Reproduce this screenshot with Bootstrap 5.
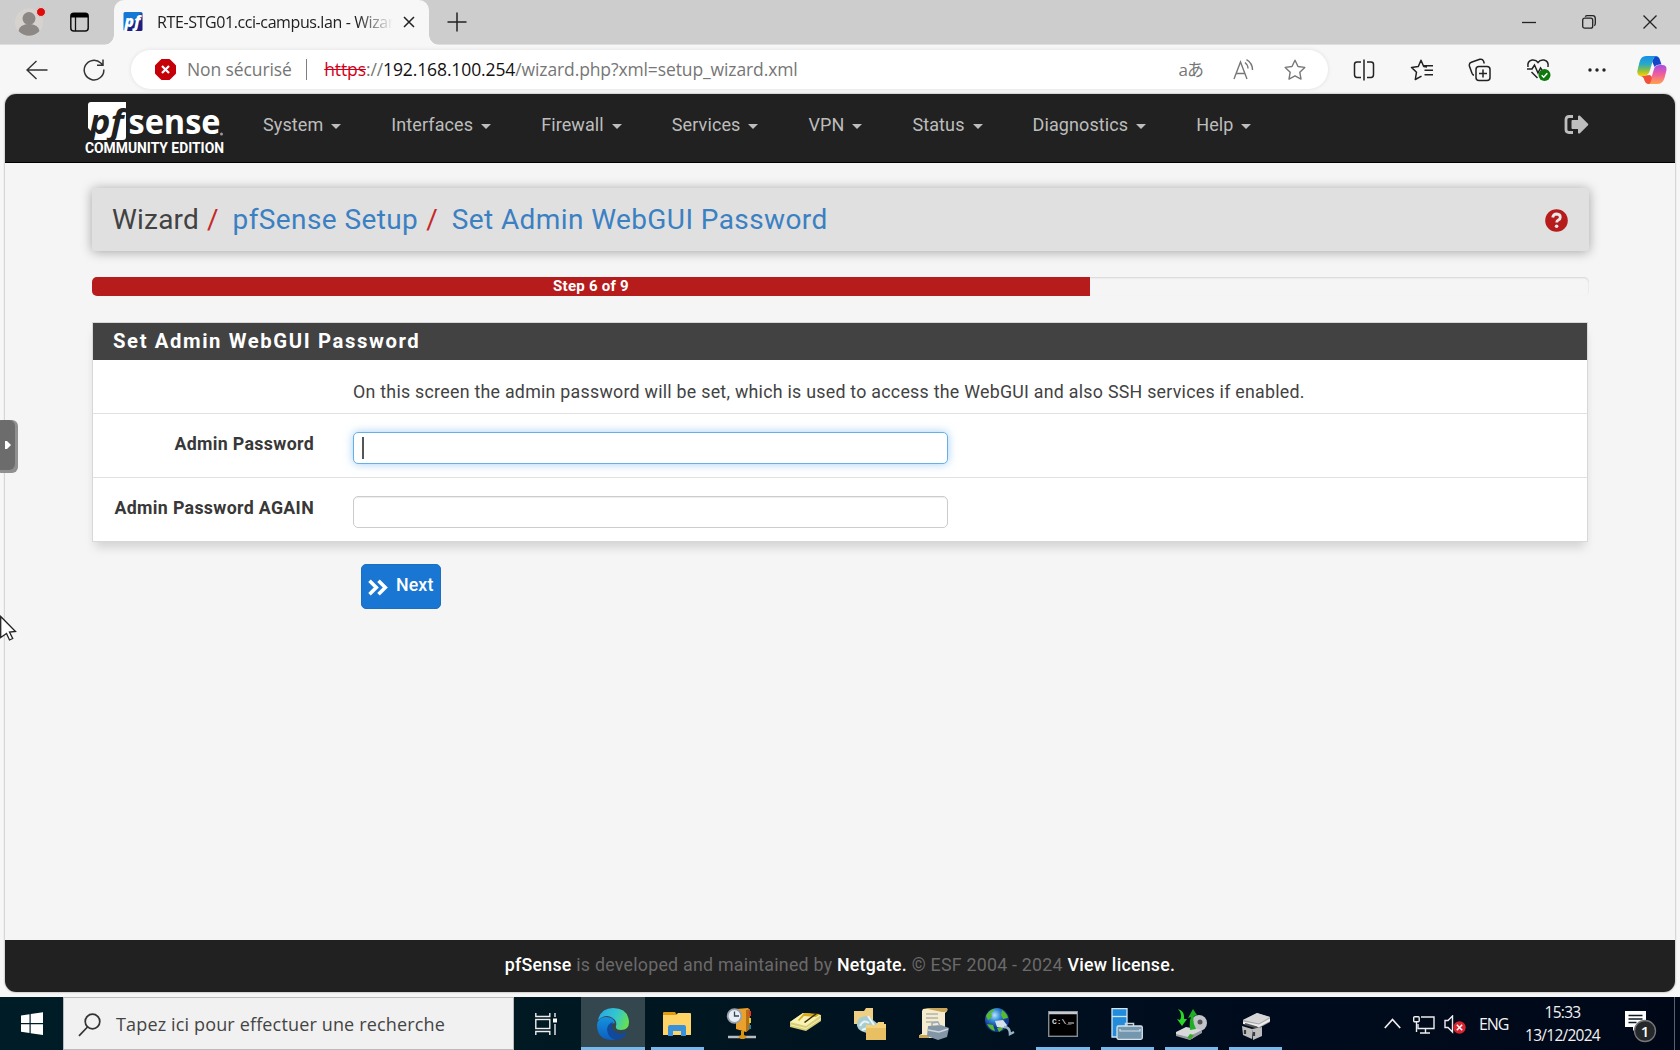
<!DOCTYPE html>
<html lang="fr">
<head>
<meta charset="utf-8">
<title>RTE-STG01.cci-campus.lan - Wizard: pfSense Setup</title>
<link href="https://cdn.jsdelivr.net/npm/bootstrap@5.3.0/dist/css/bootstrap.min.css" rel="stylesheet">
<style>
body{width:1680px;height:1050px;overflow:hidden;background:#f7f7f7;font-family:"Open Sans","Noto Sans CJK JP",sans-serif;color:#212121}
svg{display:block;flex:none}
.tabstrip{height:45px;background:#cdcdcd;border-bottom:1px solid #dedede;padding-left:14px}
.tab{position:relative;width:315px;height:45px;margin-bottom:-1px;background:#f7f7f7;border-radius:10px 10px 0 0;padding:0 0 2px 9px}
.tab:before,.tab:after{content:"";position:absolute;bottom:0;width:10px;height:10px}
.tab:before{left:-10px;background:radial-gradient(circle at 0 0,transparent 9.5px,#f7f7f7 10px)}
.tab:after{right:-10px;background:radial-gradient(circle at 100% 0,transparent 9.5px,#f7f7f7 10px)}
.spaces{margin:0 25px 0 24px}
.tabtitle{width:236px;margin-left:14px;font-size:16px;letter-spacing:-.4px;white-space:nowrap;-webkit-mask-image:linear-gradient(90deg,#000 200px,transparent 236px)}
.tabclose{margin-left:10px}
.newtab{margin-left:18px}
.winbtn{width:60.5px}
.toolbar{height:49px}
.back{margin-left:26px}
.reload{margin-left:35px}
.omni{width:1197px;height:39px;margin-left:25px;border-radius:20px;background:#fff;box-shadow:0 0 4px #0000001a;font-size:17.5px;letter-spacing:-.11px;color:#767676;white-space:nowrap}
.insecure{margin:0 11px 0 24px}
.sep{width:1.5px;height:21px;background:#808080;margin:0 17px 0 14px}
.scheme{color:#d00018;text-decoration:line-through}
.host{color:#111}
.translate{font-size:17px;letter-spacing:-1px;color:#777;margin-right:30px}
.readaloud{margin-right:29px}
.star{margin-right:22px}
.tools{margin-left:7px}
.tool{width:58.2px}
.copilot{margin-left:11px}
.pagewin{width:1670px;height:898px;margin-left:5px;background:#f5f5f5;border-radius:11px;overflow:hidden;font-family:Roboto,sans-serif;font-size:17.8px;box-shadow:0 0 2px #00000080}
.topnav{height:69px;background:#212121;border-bottom:1px solid #000;padding:0 80px}
.brand{margin-top:6px}
.menus{margin:19px 0 0 11px}
.topnav .nav-link{color:#bdbdbd;font-size:18px;line-height:24px;padding:0 25px;letter-spacing:.1px;white-space:nowrap}
.topnav .dropdown-toggle:after{margin-left:8px;border-top:5px solid;border-left:5px solid transparent;border-right:5px solid transparent;vertical-align:2px}
.logout{margin:21px 6px 0 0}
.crumbs{height:63px;margin-top:25px;background:#e0e0e0;border-radius:3px;box-shadow:0 1px 12px #00000055;padding:1px 21px 0 20px;font-size:28px;color:#424242}
.crumbs span:first-child{letter-spacing:.2px}
.crumbs a{color:#3b80c3;text-decoration:none;margin-left:14px;letter-spacing:.4px}
.slash{color:#c62828;margin-left:8px}
.main{width:1497px;margin-left:87px}
.steps{height:19px;margin-top:26px;border-radius:5px;background:#f5f5f5;box-shadow:inset 0 1px 2px #00000022}
.steps .progress-bar{background:#b71c1c;font-size:15px;font-weight:700;line-height:19px;letter-spacing:.25px}
.wizpanel{margin:26px 1px 0 0;background:#fff;border:1px solid #d8d8d8;box-shadow:0 8px 10px -3px #00000026}
.wizhead{height:37px;background:#424242;color:#fff;font-weight:700;font-size:20.3px;letter-spacing:1.6px;padding-left:20px;line-height:36px}
.wizrow{height:64px;border-top:1.5px solid #e2e2e2;padding-top:4px}
.wizrow.intro{height:53px;border-top:0;padding:12px 0 0 260px;letter-spacing:.265px;color:#424242;white-space:nowrap}
.wizlabel{width:221px;font-weight:700;letter-spacing:.32px;color:#383838;margin-bottom:6px;white-space:nowrap}
.wizrow .form-control{width:595px;height:32px;margin-left:39px;border-radius:5px;border:1.5px solid #ccc;box-shadow:inset 0 1px 1px #00000013;padding:4px 8px;background:#fff;font-size:18px}
.wizrow .form-control.active{border-color:#66afe9;box-shadow:0 0 10px #66afe999}
.caret{width:1.5px;height:22px;background:#555}
.nextbtn{width:80px;height:45px;margin:22px 0 0 269px;background:#1976d2;border:1px solid #1b6ec2;border-radius:5px;color:#fff;font-size:17.8px;font-weight:500;padding:0 0 2px 6px;gap:8px;letter-spacing:.1px}
.nextbtn:hover{background:#1976d2;color:#fff}
.nextbtn svg{margin-top:3px}
.foot{height:52px;margin-top:auto;background:#212121;color:#6a6a6a;letter-spacing:.245px;padding-bottom:1px}
.foot b{color:#fff;font-weight:500}
.taskbar{height:53px;margin-top:5px;background:linear-gradient(90deg,#001c26,#001821 35%,#000d1f 70%,#000818);color:#f2f2f2}
.startbtn{width:63px}
.searchbox{width:451px;background:#f1f1f1;border:1.5px solid #bbb;color:#444;font-size:18px;letter-spacing:.15px;white-space:nowrap;padding:2px 0 0 14px;gap:15px}
.taskview{width:67px;padding-left:21px}
.task{width:64.25px;height:53px;position:relative}
.task.running:after{content:"";position:absolute;left:5.5px;right:5.5px;bottom:0;height:3px;background:#76b9ed}
.task.current{background:#34474f}
.task.current:after{left:0;right:0}
.net{margin:2px 0 0 12px}
.vol{margin:3px 0 0 9px}
.lang{font-size:16px;letter-spacing:-1px;margin-left:12px}
.clock{font-size:15.5px;letter-spacing:-.75px;line-height:23px;width:90px;margin-left:9px;text-align:center;white-space:nowrap}
.notif{margin:4px 17px 0 15px}
.clock,.notif{transform:none}
.peek{width:1.5px;height:53px;background:#59616b;margin-right:5px}
.sidehandle{position:absolute;left:-4px;top:420px;width:22px;height:53px;background:#909090;border-radius:6px}
.sidehandle div{width:19px;height:50px;background:#6c6c6c;border-radius:6px;padding-left:4px}
.pointer{position:absolute;left:0;top:614px}
</style>
</head>
<body class="d-flex flex-column">
<div class="tabstrip d-flex align-items-center flex-shrink-0">
  <svg width="32" height="36" viewBox="14 4 32 36"><circle cx="29" cy="22.500" r="14" fill="#d6d3cf"/><circle cx="29" cy="18.500" r="6.500" fill="#8b8886"/><path d="M18.500 31a10.500 7 0 0 1 21 0A14 14 0 0 1 18.500 31z" fill="#8b8886"/><circle cx="41" cy="12" r="4.500" fill="#e00b0b" stroke="#d8d5d2"/></svg>
  <svg class="spaces" width="19" height="20" viewBox="0 0 19 20"><rect x=".8" y="1.300" width="17.400" height="17.600" rx="3" fill="none" stroke="#111" stroke-width="1.500"/><path d="M1 5.500V3.500q0-2.500 2.500-2.500h12q2.500 0 2.500 2.500v2z" fill="#000"/><path d="M5.500 5v14" stroke="#111" stroke-width="1.300"/></svg>
  <div class="tab d-flex align-items-center">
    <svg width="20" height="20" viewBox="0 0 20 20" overflow="visible"><defs><linearGradient id="fv" x1="0" y1="0" x2="1" y2="1"><stop offset=".45" stop-color="#1478d4"/><stop offset=".6" stop-color="#1c1f7e"/></linearGradient></defs><rect x=".5" width="19" height="19" rx="1.500" fill="url(#fv)"/><text x="1.500" y="14.500" font-family="Open Sans,sans-serif" font-size="16" font-weight="800" font-style="italic" fill="#fff" textLength="16" lengthAdjust="spacingAndGlyphs">pf</text></svg>
    <div class="tabtitle">RTE-STG01.cci-campus.lan - Wizar</div>
    <svg class="tabclose" width="12" height="12" viewBox="0 0 12 12"><path d="M1 1l10 10M11 1L1 11" stroke="#222" stroke-width="1.500"/></svg>
  </div>
  <svg class="newtab" width="20" height="20" viewBox="0 0 20 20"><path d="M10 .5v19M.5 10h19" stroke="#222" stroke-width="1.500"/></svg>
  <div class="d-flex ms-auto">
    <div class="winbtn d-flex justify-content-center align-items-center"><svg width="14" height="14"><path d="M0 7.500h14" stroke="#222" stroke-width="1.300"/></svg></div>
    <div class="winbtn d-flex justify-content-center align-items-center"><svg width="14" height="14" viewBox="0 0 14 14" fill="none" stroke="#222" stroke-width="1.300"><rect x=".7" y="3.200" width="10" height="10" rx="2"/><path d="M3.200 1.600Q4 .7 5.200.7h5.300q2.800 0 2.800 2.800v5q0 1.500-1 2.200"/></svg></div>
    <div class="winbtn d-flex justify-content-center align-items-center"><svg width="14" height="14" viewBox="0 0 14 14"><path d="M.5.500l13 13M13.500.500l-13 13" stroke="#222" stroke-width="1.300"/></svg></div>
  </div>
</div>
<div class="toolbar d-flex align-items-center flex-shrink-0">
  <svg class="back" width="22" height="20" viewBox="0 0 22 20" fill="none" stroke="#333" stroke-width="1.400"><path d="M10.500 1L1 10l9.500 9M1 10h20.500"/></svg>
  <svg class="reload" width="23" height="22" viewBox="0 0 23 22" fill="none" stroke="#333" stroke-width="1.500"><path d="M20.800 10.500a9.800 9.800 0 1 1-3-6.500l2 2M20 .5v5.800h-6"/></svg>
  <div class="omni d-flex align-items-center">
    <svg class="insecure" width="21" height="21" viewBox="0 0 21 21"><path d="M6.300.500h8.400l5.800 5.800v8.400l-5.800 5.800H6.300L.5 14.700V6.300z" fill="#c50008" stroke="#c50008" stroke-linejoin="round"/><path d="M7 7l7 7M14 7l-7 7" stroke="#fff" stroke-width="2.200"/></svg>
    <span>Non sécurisé</span>
    <div class="sep"></div>
    <span><span class="scheme">https</span>://<span class="host">192.168.100.254</span>/wizard.php?xml=setup_wizard.xml</span>
    <div class="d-flex align-items-center ms-auto">
      <span class="translate">aあ</span>
      <svg class="readaloud" width="22" height="21" viewBox="0 0 22 21" fill="none" stroke="#777" stroke-width="1.400"><path d="M1 20L7.500 3 14 20M3.200 14.500h8.600M12 3.500q3 2.500 3 6M13.500.7q6 3.500 6 10.300"/></svg>
      <svg class="star" width="22" height="22" viewBox="0 0 22 22" fill="none" stroke="#777" stroke-width="1.400" stroke-linejoin="round"><path d="M11 1.200l3 6.300 6.800.9-5 4.800 1.200 6.900-6-3.300-6 3.300 1.200-6.900-5-4.800 6.800-.9z"/></svg>
    </div>
  </div>
  <div class="tools d-flex align-items-center">
    <div class="tool d-flex justify-content-center"><svg width="22" height="22" viewBox="0 0 22 22" fill="none" stroke="#222" stroke-width="1.500"><path d="M8 3H4Q1.500 3 1.500 5.500v10Q1.500 18.500 4 18.500h4M14 3h4q2.500 0 2.500 2.500v10q0 3-2.500 3h-4M11 .5v21"/></svg></div>
    <div class="tool d-flex justify-content-center"><svg width="24" height="22" viewBox="0 0 24 22" fill="none" stroke="#222" stroke-width="1.500" stroke-linejoin="round"><path d="M17 8l-3.300-.5L11 1.200 8.300 7.500l-6.800.9 5 4.800L5.300 20.500l6.200-3.300M14.500 11.300H23M13.500 6.800H23M14.500 15.800H23"/></svg></div>
    <div class="tool d-flex justify-content-center"><svg width="24" height="24" viewBox="0 0 24 24" fill="none" stroke="#222" stroke-width="1.500"><rect x="8" y="8.500" width="14" height="14" rx="3"/><path d="M15 11.500v8M11 15.500h8M6 17.200q-1.300-.2-2-2L1.400 8Q.8 5.200 3.300 4.300l8.500-3Q14.500.700 15.500 3l.8 2.500"/></svg></div>
    <div class="tool d-flex justify-content-center"><svg width="25" height="24" viewBox="0 0 25 24" fill="none" stroke="#222" stroke-width="1.500"><path d="M2 9Q1 3 6 2q4-.5 6 2.500Q14 1.500 18 2q5 1 4 7M1 11h5l2.500-4 3.500 8 2.500-5 1.500 2M5.500 14l6 6"/><circle cx="18.500" cy="17" r="6" fill="#0e7a0d" stroke="none"/><path d="M15.700 17.200l2 2 3.600-4" stroke="#fff"/></svg></div>
    <div class="tool d-flex justify-content-center"><svg width="20" height="6" viewBox="0 0 20 6" fill="#222"><circle cx="3" cy="3" r="1.700"/><circle cx="10" cy="3" r="1.700"/><circle cx="17" cy="3" r="1.700"/></svg></div>
    <svg class="copilot" width="30" height="28" viewBox="0 0 30 28"><defs><linearGradient id="c1" x1="0" y1="0" x2="0" y2="1"><stop offset="0" stop-color="#1b8ee8"/><stop offset=".4" stop-color="#27a9c9"/><stop offset=".7" stop-color="#86bf45"/><stop offset="1" stop-color="#ffd000"/></linearGradient><linearGradient id="c2" x1="0" y1="0" x2="0" y2="1"><stop offset="0" stop-color="#a94be8"/><stop offset=".5" stop-color="#f0609a"/><stop offset="1" stop-color="#ffa24c"/></linearGradient></defs><path d="M8 28q5 0 6-5l3-10q1-4 6-4h2q5 0 4.500 5l-2 8q-2 6-7 6z" fill="url(#c2)"/><path d="M18 0q4 0 5 4l1.500 4.500Q19 8 17.500 11L15 5z" fill="#1347c8"/><path d="M3 20q3 0 4 3 1 5 5 5 2-1 3-7l-2-2z" fill="#f0503c"/><path d="M21 0q-4 0-5 4l-3 10q-1.500 6-7 6H4Q0 20 .3 15L2.500 6Q4 0 9 0z" fill="url(#c1)"/></svg>
  </div>
</div>
<div class="pagewin d-flex flex-column flex-shrink-0">
  <nav class="topnav d-flex flex-shrink-0">
    <svg class="brand" width="142" height="60" viewBox="85 100 142 60"><path d="M88 105q0-3 3-3h35v35q0 3-3 3H92l-1-9-3-3z" fill="#fff"/><text x="89.500" y="133.500" font-family="Open Sans,sans-serif" font-size="34" font-weight="700" font-style="italic" fill="#212121" textLength="34" lengthAdjust="spacingAndGlyphs">pf</text><text x="128.500" y="133.500" font-family="Open Sans,sans-serif" font-size="34" font-weight="700" fill="#fff" textLength="92" lengthAdjust="spacingAndGlyphs">sense</text><circle cx="221.500" cy="134" r="1.500" fill="#999"/><text x="85" y="152.700" font-family="Roboto,sans-serif" font-size="14" font-weight="700" fill="#fff" textLength="139" lengthAdjust="spacingAndGlyphs">COMMUNITY EDITION</text></svg>
    <ul class="nav flex-nowrap menus">
      <li class="nav-item"><a class="nav-link dropdown-toggle" href="#">System</a></li>
      <li class="nav-item"><a class="nav-link dropdown-toggle" href="#">Interfaces</a></li>
      <li class="nav-item"><a class="nav-link dropdown-toggle" href="#">Firewall</a></li>
      <li class="nav-item"><a class="nav-link dropdown-toggle" href="#">Services</a></li>
      <li class="nav-item"><a class="nav-link dropdown-toggle" href="#">VPN</a></li>
      <li class="nav-item"><a class="nav-link dropdown-toggle" href="#">Status</a></li>
      <li class="nav-item"><a class="nav-link dropdown-toggle" href="#">Diagnostics</a></li>
      <li class="nav-item"><a class="nav-link dropdown-toggle" href="#">Help</a></li>
    </ul>
    <svg class="ms-auto logout" width="25" height="19" viewBox="0 0 25 19"><path d="M9 1.500H5q-3 0-3 3v10q0 3 3 3h4" fill="none" stroke="#bdbdbd" stroke-width="2.800"/><path d="M7.500 6q0-1 1-1H14V1q1-1 2-.3l8 8q.7.800 0 1.600l-8 8q-1 .7-2-.3v-4H8.500q-1 0-1-1z" fill="#bdbdbd"/></svg>
  </nav>
  <main class="main">
    <div class="crumbs d-flex align-items-center">
      <span>Wizard</span><span class="slash">/</span>
      <a href="#">pfSense Setup</a><span class="slash">/</span>
      <a href="#">Set Admin WebGUI Password</a>
      <svg class="ms-auto" width="23" height="23" viewBox="0 0 23 23"><circle cx="11.500" cy="11.500" r="11.300" fill="#b71c1c"/><path d="M7.700 8.500q.5-3.500 4-3.500 3.600.2 3.600 3.200 0 1.700-1.900 2.700-1.700.9-1.700 2.600" fill="none" stroke="#e8e8e8" stroke-width="2.800"/><circle cx="11.600" cy="17.300" r="1.800" fill="#e8e8e8"/></svg>
    </div>
    <div class="progress steps"><div class="progress-bar" style="width:66.667%">Step 6 of 9</div></div>
    <section class="wizpanel">
      <div class="wizhead">Set Admin WebGUI Password</div>
      <div class="wizrow intro d-flex align-items-center">On this screen the admin password will be set, which is used to access the WebGUI and also SSH services if enabled.</div>
      <div class="wizrow d-flex align-items-center"><label class="wizlabel text-end">Admin Password</label><div class="form-control active"><div class="caret"></div></div></div>
      <div class="wizrow d-flex align-items-center"><label class="wizlabel text-end">Admin Password AGAIN</label><div class="form-control"></div></div>
    </section>
    <button class="btn nextbtn d-flex align-items-center"><svg width="20" height="17" viewBox="0 0 20 17" fill="none" stroke="#fff" stroke-width="3.600"><path d="M1.500 1.700L8.300 8.500l-6.800 6.800M10.500 1.700l6.800 6.800-6.800 6.800"/></svg>Next</button>
  </main>
  <footer class="foot d-flex align-items-center justify-content-center"><div><b>pfSense</b> is developed and maintained by <b>Netgate.</b> © ESF 2004 - 2024 <b>View license.</b></div></footer>
</div>
<div class="taskbar d-flex flex-shrink-0">
  <div class="startbtn d-flex justify-content-center align-items-center"><svg width="22" height="23" viewBox="0 0 22 23" fill="#fff"><path d="M0 3.500L8.500 2.200V11H0zM9.700 2L22 .3V11H9.700zM0 12.200h8.500V21L0 19.700zM9.700 12.200H22V23L9.700 21.200z"/></svg></div>
  <div class="searchbox d-flex align-items-center"><svg width="23" height="24" viewBox="0 0 23 24" fill="none" stroke="#333" stroke-width="1.700"><circle cx="14.500" cy="8.500" r="7.300"/><path d="M9.500 14L1 22.800"/></svg>Tapez ici pour effectuer une recherche</div>
  <div class="taskview d-flex align-items-center"><svg width="23" height="22" viewBox="0 0 23 22" fill="none" stroke="#eee" stroke-width="1.400"><path d="M.8 0v3.500h14V0M.8 22v-3.500h14V22M20 0v4M20 11v11"/><rect x=".8" y="6.500" width="14" height="9"/><rect x="18" y="5.500" width="4" height="4" fill="#fff" stroke="none"/></svg></div>
  <div class="task running current d-flex justify-content-center align-items-center"><svg width="32" height="32" viewBox="0 0 32 32"><defs><linearGradient id="e1" x1="0" y1=".3" x2="1" y2=".6"><stop offset="0" stop-color="#28a8e4"/><stop offset=".55" stop-color="#35c6cf"/><stop offset="1" stop-color="#66e14c"/></linearGradient><linearGradient id="e2" x1="0" y1="0" x2="0" y2="1"><stop offset="0" stop-color="#1692dd"/><stop offset="1" stop-color="#0c5fc0"/></linearGradient></defs><path d="M1 12Q4 0 16 0q15 0 16 14 0 8-8 8-6 0-5-4 1-3-1-6Q10 4 1 12z" fill="url(#e1)"/><path d="M0 17Q1 9 9 9q8 0 9 6-5 0-5 6 0 8 9 9-3 2-8 2Q0 31 0 17z" fill="url(#e2)"/><path d="M16 14q-6 2-6 8 1 8 9 10 8-1 11-7-1-1-5 .5-8 1-10-6-.5-3 1-5.500z" fill="#114a9c"/></svg></div>
  <div class="task running d-flex justify-content-center align-items-center"><svg width="30" height="24" viewBox="0 0 30 24"><path d="M1 1q0-1 1-1h11l2 3H1z" fill="#e09b12"/><path d="M1 3h13l2-2h12q1 0 1 1v21H1z" fill="#ffd467"/><path d="M6 24V15q0-2 2-2h14q2 0 2 2v9h-5v-5h-8v5z" fill="#3991dc"/></svg></div>
  <div class="task d-flex justify-content-center align-items-center"><svg width="32" height="32" viewBox="0 0 32 32"><path d="M10 1l12-1 2 2v18l-4 4-10-3z" fill="#e9a02c"/><path d="M20 2l4-1v20l-4 3z" fill="#b66e14"/><path d="M23 3h2v5h-2z" fill="#e33"/><path d="M23 10h2v5h-2z" fill="#dc3"/><path d="M23 17h2v4h-2z" fill="#28a"/><path d="M2 29h28" stroke="#b8bcc0" stroke-width="2.500"/><path d="M15 23h3v4l3 2-3 2h-3l-3-2 3-2z" fill="#d99312"/><circle cx="8.500" cy="8" r="6.800" fill="#e8eef5" stroke="#9aa2ac" stroke-width="1.800"/><path d="M8.500 3.500V8H13" fill="none" stroke="#345" stroke-width="1.300"/></svg></div>
  <div class="task d-flex justify-content-center align-items-center"><svg class="mb-1" width="32" height="22" viewBox="0 0 32 22"><path d="M0 11L13 2l18 2v6L16 20 0 16z" fill="#d9cf7a"/><path d="M0 11L13 2l18 2-15 11z" fill="#f8f3b4"/><path d="M8 9l6-7 16 1-4 3-12-1-5 5z" fill="#d8aa1c"/><path d="M14 11L26 2l1 1-12 9z" fill="#3b2a08"/><path d="M1 14l15 3.500L31 7.500" fill="none" stroke="#f5f0b0"/></svg></div>
  <div class="task d-flex justify-content-center align-items-center"><svg width="32" height="32" viewBox="0 0 32 32"><path d="M0 3h10l2-3h7v16H0z" fill="#efcf83"/><path d="M3 18Q2 8 14 8l10 8-3 9Q5 26 3 18z" fill="#a8cdd1"/><path d="M6 18q3-7 9-3M14 8l6 9M8 22l8-3" stroke="#e8f5f5" stroke-width="2" fill="none"/><path d="M12 17h10l2-3h6v2h2v16H12z" fill="#f4d27b"/><path d="M12 20h20v12H12z" fill="#e9bf63"/></svg></div>
  <div class="task d-flex justify-content-center align-items-center"><svg width="32" height="32" viewBox="0 0 32 32"><path d="M5 1h24q1 2-2 4v22q-1 3-4 3H1q0-4 3-4V3z" fill="#f5ecd0"/><path d="M5 0h24q2 3-2 4H24zM1 27h10v3H1z" fill="#c9a659"/><path d="M8 6h12M8 10h12M8 14h12" stroke="#b3b3a6" stroke-width="1.500"/><path d="M10 18l13-1 8 3-2 9-9 3-11-4z" fill="#8496a6"/><path d="M10 22l11 2 9-3" stroke="#cdd6dd" fill="none" stroke-width="1.500"/><path d="M14 18v-3l6-1 2 4" stroke="#9aabb8" fill="none" stroke-width="1.500"/></svg></div>
  <div class="task d-flex justify-content-center align-items-center"><svg width="32" height="32" viewBox="0 0 32 32"><defs><radialGradient id="gl" cx=".4" cy=".3"><stop offset="0" stop-color="#b5e4ff"/><stop offset=".5" stop-color="#3388d5"/><stop offset="1" stop-color="#123a92"/></radialGradient></defs><circle cx="14" cy="12" r="12" fill="url(#gl)"/><path d="M3 8q4-7 9-7-2 3-4 4l1 4-4 3zM19 2q5 3 6 8l-5 1-2-4zM4 16l6 1 2 6q-5-1-8-7zM14 20l5-1 1 2-4 3z" fill="#57bb2c"/><path d="M12 13l8-1 4 5-2 3-8-1z" fill="#d6e2ea"/><path d="M21 19q6 0 6 7l4-2" fill="none" stroke="#99b4c4" stroke-width="2.500"/></svg></div>
  <div class="task running d-flex justify-content-center align-items-center"><svg width="30" height="26" viewBox="0 0 30 26"><rect x=".7" y=".7" width="28.600" height="24.600" fill="#000" stroke="#858b90" stroke-width="1.400"/><path d="M1 2h28" stroke="#c6cace" stroke-width="2.500"/><text x="4" y="12.500" fill="#ddd" font-family="Liberation Mono,monospace" font-weight="700" font-size="8">C:\_</text><path d="M20 12h6" stroke="#ddd"/></svg></div>
  <div class="task running d-flex justify-content-center align-items-center"><svg width="32" height="32" viewBox="0 0 32 32"><path d="M1 .7h15V29H1z" fill="#238bd9" stroke="#cce7fa" stroke-width="1.300"/><path d="M1 8.500h15" stroke="#cce7fa" stroke-width="1.300"/><path d="M14.500 18v-2.500h8V18" fill="none" stroke="#c8d9e3" stroke-width="1.500"/><rect x="6" y="18" width="25.300" height="13.300" rx="1.500" fill="#7597ae" stroke="#d4e3ec" stroke-width="1.300"/><path d="M9 21v2h20v-2" fill="none" stroke="#d4e3ec" stroke-width="1.200"/></svg></div>
  <div class="task running d-flex justify-content-center align-items-center"><svg width="32" height="32" viewBox="0 0 32 32"><circle cx="24" cy="15" r="8" fill="#c2c4ca"/><circle cx="25" cy="14" r="2.500" fill="#555"/><path d="M1 24l10-5 16 3-9 8q-2 2-5 1L1 27z" fill="#d7d9db"/><path d="M1 26l12 3 14-7v3l-12 7L1 28z" fill="#96999d"/><path d="M15 26l4 1-3 4-4-1z" fill="#38ab27"/><path d="M3 1q7 2 6 10h3l-5 7-5-7 3 1Q8 6 3 1z" fill="#29d827"/><path d="M15 22q-1-9 1-13l-3 1 5-9 4 6-3 1q-2 6 2 13z" fill="#22ad26"/></svg></div>
  <div class="task running d-flex justify-content-center align-items-center"><svg class="mt-1" width="30" height="28" viewBox="0 0 30 28"><path d="M2 8L16 1l13 4v5l-11 6L2 11z" fill="#a8a8a8"/><path d="M2 8L16 1l13 4-11 6.500z" fill="#d6d6d6"/><path d="M2 9.500l16 3 11-6v2.500l-11 6L2 12z" fill="#ededed"/><path d="M4 12l12 3.500" stroke="#555" stroke-width="2"/><path d="M1 14l10 3v10l-9-4zM11 17l10-2v9l-9 4z" fill="#bcbcbc"/><path d="M4 18v4M13 20v4" stroke="#3b3b3b" stroke-width="2.200"/></svg></div>
  <div class="d-flex align-items-center ms-auto">
    <svg width="17" height="11" viewBox="0 0 17 11" fill="none" stroke="#eee" stroke-width="1.700"><path d="M.8 10l7.700-8.500L16.200 10"/></svg>
    <svg class="net" width="22" height="18" viewBox="0 0 22 18" fill="none" stroke="#eee" stroke-width="1.400"><path d="M8 1h13v11.500H5V8M12.500 12.500V17M7 17h10"/><rect x=".7" y=".7" width="5.500" height="5" rx="1"/><path d="M3.500 6v10"/></svg>
    <svg class="vol" width="23" height="20" viewBox="0 0 23 20"><path d="M1 5.500h3L8.500 1v16L4 12.500H1z" fill="none" stroke="#eee" stroke-width="1.400"/><circle cx="15.500" cy="12.500" r="6.200" fill="#d9232f"/><path d="M12.800 9.800l5.400 5.400M18.200 9.800l-5.400 5.400" stroke="#fff" stroke-width="1.500"/></svg>
    <span class="lang">ENG</span>
    <div class="clock">15:33<br>13/12/2024</div>
    <svg class="notif" width="34" height="34" viewBox="0 0 34 34"><path d="M2 2h21v16h-9l-4 4v-4H2z" fill="#fff"/><path d="M5.500 6.500h14M5.500 10h14M5.500 13.500h8" stroke="#111b28" stroke-width="1.300"/><circle cx="22" cy="22" r="10.500" fill="#25292c" stroke="#777" stroke-width="1.300"/><text x="22" y="27.500" text-anchor="middle" font-family="Open Sans,sans-serif" font-weight="600" font-size="15" fill="#fff">1</text></svg>
    <div class="peek"></div>
  </div>
</div>
<div class="sidehandle"><div class="d-flex align-items-center justify-content-center"><svg width="6" height="8"><path d="M0 0h2l4 4-4 4H0z" fill="#fff"/></svg></div></div>
<svg class="pointer" width="18" height="28" viewBox="0 0 18 28"><path d="M.7 2.500L15.500 17.500 9.500 18l3.200 6.500-3.200 1.500-3-6.500-5.800 4z" fill="#fff" stroke="#222" stroke-width="1.300"/></svg>
<script src="https://cdn.jsdelivr.net/npm/bootstrap@5.3.0/dist/js/bootstrap.bundle.min.js"></script>
</body>
</html>
